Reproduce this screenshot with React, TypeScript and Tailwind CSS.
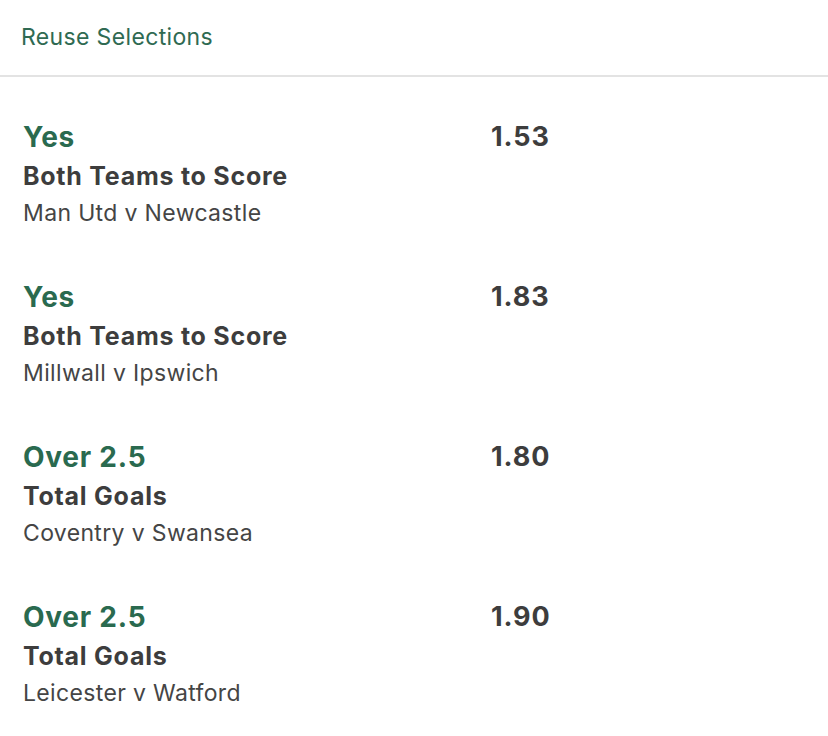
import React from "react";

const rows = [
  { sel: "Yes", market: "Both Teams to Score", event: "Man Utd v Newcastle", odds: "1.53" },
  { sel: "Yes", market: "Both Teams to Score", event: "Millwall v Ipswich", odds: "1.83" },
  { sel: "Over 2.5", market: "Total Goals", event: "Coventry v Swansea", odds: "1.80" },
  { sel: "Over 2.5", market: "Total Goals", event: "Leicester v Watford", odds: "1.90" },
];

export default function App() {
  return (
    <div className="w-[828px] h-[736px] bg-white overflow-hidden" style={{ fontFamily: "Inter, 'Noto Sans', sans-serif" }}>
      <div className="h-[75px] flex items-center pl-[21px]">
        <span className="text-[23px] text-[#2f6a52] leading-none tracking-[0.35px]">Reuse Selections</span>
      </div>
      <div className="h-[2px] bg-[#e3e3e3]" />
      <div className="pt-[40px]">
        {rows.map((r, i) => (
          <div key={i} className="flex h-[160px]">
            <div className="w-[468px] pl-[23px] flex flex-col">
              <div className="text-[28px] font-bold text-[#2a6a4f] leading-[40px] tracking-[0.75px]">{r.sel}</div>
              <div className="text-[25px] font-bold text-[#3d3d3d] leading-[38px] tracking-[0.75px]">{r.market}</div>
              <div className="text-[23px] text-[#454545] leading-[36px] tracking-[0.35px]">{r.event}</div>
            </div>
            <div className="pl-[23px] text-[27px] font-bold text-[#3d3d3d] leading-[40px] tracking-[0.9px]">{r.odds}</div>
          </div>
        ))}
      </div>
    </div>
  );
}
